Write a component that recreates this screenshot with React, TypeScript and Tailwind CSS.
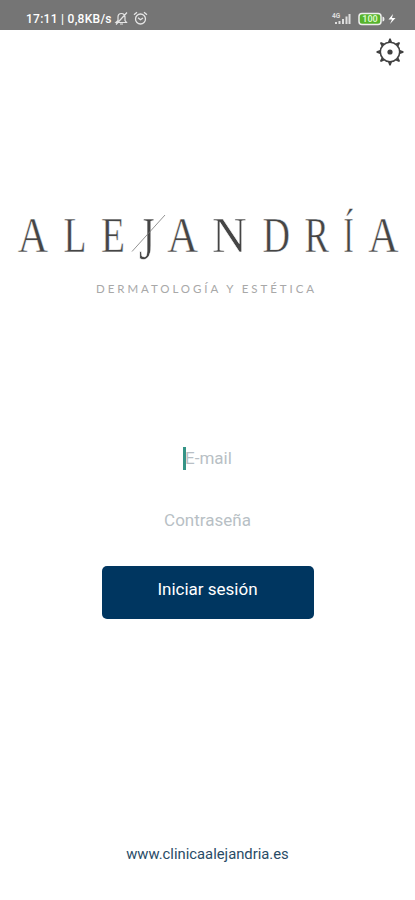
type Letter = {
  char: string;
  left: number;
  right: number;
  inkStart: number;
  inkEnd: number;
  baseline?: number;
  stretch?: number;
};

const SIZE = 51.5;

const letters: Letter[] = [
  { char: 'A', left: 18.5, right: 47.5, inkStart: 0.015, inkEnd: 0.706 },
  { char: 'L', left: 64, right: 86, inkStart: 0.012, inkEnd: 0.598 },
  { char: 'E', left: 101.5, right: 124.5, inkStart: 0.012, inkEnd: 0.597 },
  { char: 'J', left: 139.5, right: 154, inkStart: 0.01, inkEnd: 0.37, baseline: 58.5, stretch: 1.2 },
  { char: 'A', left: 168, right: 197.5, inkStart: 0.015, inkEnd: 0.706 },
  { char: 'N', left: 212.5, right: 246, inkStart: 0.012, inkEnd: 0.707 },
  { char: 'D', left: 263, right: 288.5, inkStart: 0.016, inkEnd: 0.685 },
  { char: 'R', left: 305, right: 328.5, inkStart: 0.017, inkEnd: 0.659 },
  { char: 'Í', left: 344, right: 353, inkStart: 0.018, inkEnd: 0.315 },
  { char: 'A', left: 369, right: 398, inkStart: 0.015, inkEnd: 0.706 },
];

function Wordmark() {
  return (
    <svg width="415" height="90" viewBox="0 -10 415 90" className="block overflow-visible" role="img" aria-label="Alejandría">
      <g fill="#454545" stroke="#fff" strokeWidth="0.5" fontSize={SIZE} className="font-['Liberation_Serif',serif]">
        {letters.map((l, i) => {
          const sx = (l.right - l.left) / ((l.inkEnd - l.inkStart) * SIZE);
          const tx = l.left - l.inkStart * SIZE * sx;
          return (
            <text key={i} transform={`translate(${tx} ${l.baseline ?? 51.5}) scale(${sx} ${l.stretch ?? 1})`}>
              {l.char}
            </text>
          );
        })}
      </g>
      <path d="M132 51.500 165 15" stroke="#777" strokeWidth="0.8" />
    </svg>
  );
}

function StatusBar() {
  return (
    <header className="flex h-[29.5px] items-end justify-between bg-[#757575] pr-[18px] pb-[3px] pl-[26px] text-white">
      <div className="flex h-4 items-center">
        <span className="w-[87px] text-[12px] leading-4 font-medium whitespace-nowrap tracking-[0.27px]">17:11 | 0,8KB/s</span>
        <svg width="15" height="15" viewBox="0 0 15 15" className="ml-[1px]" fill="none" stroke="#e5e5e5" strokeWidth="1.2">
          <path d="M2 11.5h10.5L11 9.5V6A3.5 3.5 0 0 0 4 6v3.5zM6 13h3M2 13.5 13 1.5" />
        </svg>
        <svg width="15" height="15" viewBox="0 0 15 15" className="ml-[4px]" fill="none" stroke="#e5e5e5" strokeWidth="1.3">
          <circle cx="7.5" cy="8" r="5" />
          <path d="m1 3.8 3-2.5M14 3.8l-3-2.5M5 6.8l2.5 2L10 7" />
        </svg>
      </div>
      <div className="flex h-4 items-center">
        <svg width="22" height="14" viewBox="0 0 22 14" fill="#dedede">
          <text x="2" y="5.500" fontSize="6.5" fontWeight="700">4G</text>
          <path d="M5 10h2v2H5zM8.500 9h2v3h-2zM12 7h2v5h-2zM15.500 4.500h2V12h-2zM18.500 2h2v10h-2z" />
        </svg>
        <svg width="41" height="14" viewBox="0 0 41 14" className="ml-[4px]">
          <rect x="3" y="1.500" width="22" height="11" rx="3" fill="#56b32c" stroke="#eee" strokeWidth="1.500" />
          <path d="M26.500 4.500q2 0 2 2.500t-2 2.500" fill="#eee" />
          <text x="14" y="10.200" textAnchor="middle" fontSize="9" fontWeight="700" fill="#d4f7c4">100</text>
          <path d="m37 2-4.500 5.500H36L34 12l5.500-6H36z" fill="#fff" />
        </svg>
      </div>
    </header>
  );
}

function GearIcon() {
  return (
    <svg width="28" height="28" viewBox="0 0 28 28" fill="none" stroke="#414141">
      <circle cx="14" cy="14" r="9.700" strokeWidth="1.600" />
      <circle cx="14" cy="14" r="2.600" fill="#414141" stroke="none" />
      {[0, 45, 90, 135, 180, 225, 270, 315].map((a) => (
        <path key={a} d="m12 4 1.300-3.500h1.400L16 4z" fill="#414141" stroke="none" transform={`rotate(${a} 14 14)`} />
      ))}
    </svg>
  );
}

export default function App() {
  return (
    <main className="flex h-[900px] w-[415px] flex-col overflow-hidden bg-white font-[Roboto,sans-serif]">
      <StatusBar />
      <button aria-label="Ajustes" className="mt-[8.5px] mr-[11px] self-end">
        <GearIcon />
      </button>
      <section className="mt-[124px]">
        <Wordmark />
        <p className="mt-[1px] pl-[96px] font-[Lato,sans-serif] text-[11.5px] leading-4 font-normal tracking-[2.93px] whitespace-nowrap text-[#a8a8a8]">
          DERMATOLOGÍA Y ESTÉTICA
        </p>
      </section>
      <form className="mt-[149px] flex flex-col items-center">
        <div className="flex h-6 items-center text-[17px] text-[#b8bfc5]">
          <span className="-mr-px h-[23px] w-[3px] bg-[#359486]" />
          <span className="leading-6">E-mail</span>
        </div>
        <div className="mt-[38px] h-6 text-[17px] leading-6 text-[#b8bfc5]">Contraseña</div>
        <button type="button" className="mt-[34px] h-[53px] w-[212px] rounded-[5px] bg-[#003660] pb-[7px] text-[17px] leading-6 text-white">
          Iniciar sesión
        </button>
      </form>
      <footer className="mt-[225px] text-center text-[14.8px] leading-5 text-[#294b66]">www.clinicaalejandria.es</footer>
    </main>
  );
}
